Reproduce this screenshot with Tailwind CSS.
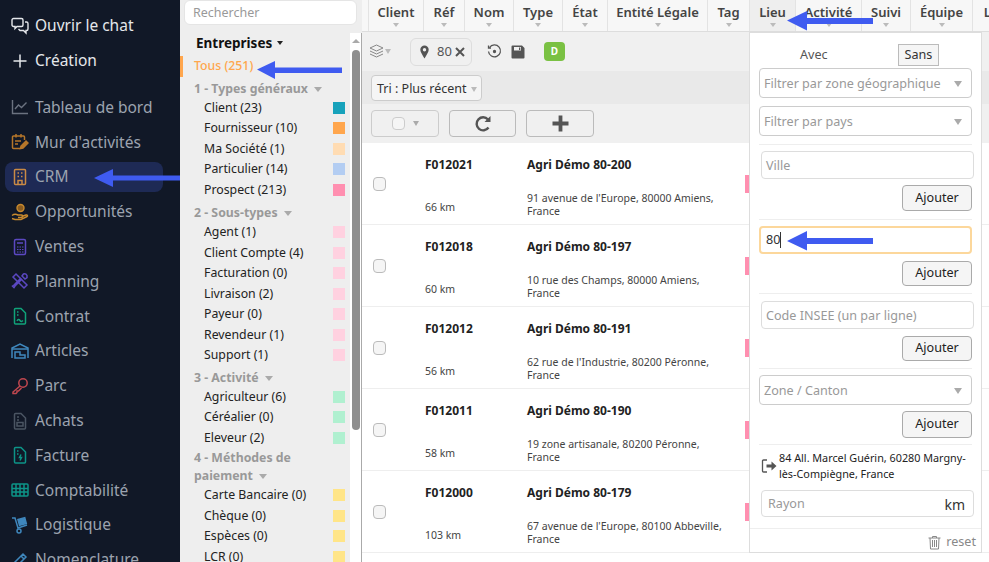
<!DOCTYPE html>
<html lang="fr">
<head>
  <meta charset="UTF-8">
  <title>CRM - Entreprises</title>
  <script src="https://cdn.jsdelivr.net/npm/@tailwindcss/browser@4"></script>
</head>
<body class="w-[989px] h-[562px] overflow-hidden relative bg-white font-['Noto_Sans',sans-serif]">
<div class="flex h-[562px] overflow-hidden">

  <!-- menu principal -->
  <aside class="w-[180px] shrink-0 bg-[#111827] text-[15.500px] text-[#9ca3af] overflow-hidden pt-[8px]">
    <div class="flex items-center h-[35px] pl-[11px] gap-[6px] text-[#e5e7eb]">
      <svg class="w-[18px] h-[18px]" viewBox="0 0 18 18" fill="none" stroke="#e5e7eb" stroke-width="1.4"><path d="M2.5 1.5h8a1.5 1.5 0 0 1 1.5 1.5v5a1.5 1.5 0 0 1-1.5 1.5H6l-2 2v-2H2.500A1.500 1.500 0 0 1 1 8V3a1.500 1.500 0 0 1 1.500-1.500z"/><path d="M14 5h1.500A1.500 1.500 0 0 1 17 6.500V12a1.500 1.500 0 0 1-1.500 1.500H15v2.500l-2.500-2.500H9l-1.500-1.500"/></svg>
      <span>Ouvrir le chat</span>
    </div>
    <div class="flex items-center h-[35px] pl-[11px] gap-[6px] text-[#e5e7eb]">
      <svg class="w-[18px] h-[18px]" viewBox="0 0 18 18" fill="none" stroke="#e5e7eb" stroke-width="1.5"><path d="M9 2.500v13M2.500 9h13"/></svg>
      <span>Création</span>
    </div>
    <div class="h-[12px]"></div>
    <div class="flex items-center h-[34.800px] pl-[11px] gap-[6px]">
      <svg class="w-[18px] h-[18px]" viewBox="0 0 18 18" fill="none" stroke="#6b7280" stroke-width="1.4"><path d="M1.500 2v13.500h15.500"/><path d="M4 11l3.500-4 3 2.500 5-5"/></svg>
      <span>Tableau de bord</span>
    </div>
    <div class="flex items-center h-[34.800px] pl-[11px] gap-[6px]">
      <svg class="w-[18px] h-[18px]" viewBox="0 0 18 18" fill="none" stroke="#b5762a" stroke-width="1.5"><path d="M9 15.500H2.500a1 1 0 0 1-1-1V4a1 1 0 0 1 1-1h10a1 1 0 0 1 1 1v3"/><path d="M5 1v3.500M10 1v3.500M4 8h6M4 11h3"/><path d="M9.500 15.500l.5-2.500 5-5 2 2-5 5z" fill="#b5762a"/></svg>
      <span>Mur d'activités</span>
    </div>
    <div class="flex items-center h-[30px] my-[2.400px] ml-[5px] w-[158px] pl-[6px] gap-[6px] rounded-lg bg-[#1e2a55]">
      <svg class="w-[18px] h-[18px]" viewBox="0 0 18 18" fill="none" stroke="#c98a45" stroke-width="1.500"><rect x="3.500" y="1.500" width="11" height="15" rx="1"/><path d="M6.500 5h1.500M10 5h1.500M6.500 8.500h1.500M10 8.500h1.500M7 16.500v-4h4v4"/></svg>
      <span>CRM</span>
    </div>
    <div class="flex items-center h-[34.800px] pl-[11px] gap-[6px]">
      <svg class="w-[18px] h-[18px]" viewBox="0 0 18 18" fill="none" stroke="#c98a2e" stroke-width="1.400"><circle cx="9.500" cy="5" r="3.500" fill="#8a5c20"/><path d="M1 12.500c2-1.500 4-1.500 6-.5h3.500a1 1 0 0 1 0 2.500H7"/><path d="M10.500 13.500l4.500-1.500c1.500-.5 2 1 1 1.500L10 16.500H4l-3-1"/></svg>
      <span>Opportunités</span>
    </div>
    <div class="flex items-center h-[34.800px] pl-[11px] gap-[6px]">
      <svg class="w-[18px] h-[18px]" viewBox="0 0 18 18" fill="none" stroke="#5b48c2" stroke-width="1.500"><rect x="3.500" y="1.500" width="11" height="15" rx="1.500"/><path d="M6 5h6"/><path d="M6 9h1.500M8.500 9H10M11 9h1.500M6 11.500h1.500M8.500 11.500H10M11 11.500h1.500M6 14h1.500M8.500 14H10M11 14h1.500" stroke-width="1.200"/></svg>
      <span>Ventes</span>
    </div>
    <div class="flex items-center h-[34.800px] pl-[11px] gap-[6px]">
      <svg class="w-[18px] h-[18px]" viewBox="0 0 18 18" fill="none" stroke="#5b48c2" stroke-width="1.500"><path d="M2 5l3-3 11 11-3 3z"/><path d="M16 3.500a3 3 0 0 0-3.500-1.500L11 4l3 3 2-1.500z"/><path d="M11 7L4 14l-1 1.500L1.500 14 3 13l7-7"/></svg>
      <span>Planning</span>
    </div>
    <div class="flex items-center h-[34.800px] pl-[11px] gap-[6px]">
      <svg class="w-[18px] h-[18px]" viewBox="0 0 18 18" fill="none" stroke="#10a37a" stroke-width="1.500"><path d="M3.500 2.500a1 1 0 0 1 1-1H10l4.500 4.500v10a1 1 0 0 1-1 1h-9a1 1 0 0 1-1-1z"/><path d="M6 5h1.500M6 8h1.500M6 14c1-2 2-2 3-.5s2 1 3 0"/></svg>
      <span>Contrat</span>
    </div>
    <div class="flex items-center h-[34.800px] pl-[11px] gap-[6px]">
      <svg class="w-[18px] h-[18px]" viewBox="0 0 18 18" fill="none" stroke="#3f87bd" stroke-width="1.500"><path d="M1 16V6l8-4 8 4v10"/><path d="M1 7h16M4 16v-6h5v3h5v3z"/></svg>
      <span>Articles</span>
    </div>
    <div class="flex items-center h-[34.800px] pl-[11px] gap-[6px]">
      <svg class="w-[18px] h-[18px]" viewBox="0 0 18 18" fill="none" stroke="#c0474f" stroke-width="1.500"><circle cx="12" cy="6" r="4.200"/><path d="M9 9l-7 6v1.500h3l1-1v-1.500h1.500l3-3"/></svg>
      <span>Parc</span>
    </div>
    <div class="flex items-center h-[34.800px] pl-[11px] gap-[6px]">
      <svg class="w-[18px] h-[18px]" viewBox="0 0 18 18" fill="none" stroke="#4b5563" stroke-width="1.500"><path d="M3.500 2.500a1 1 0 0 1 1-1H10l4.500 4.500v10a1 1 0 0 1-1 1h-9a1 1 0 0 1-1-1z"/><path d="M6 5h2M6 8h2"/><rect x="6" y="10.500" width="6" height="3.500"/></svg>
      <span>Achats</span>
    </div>
    <div class="flex items-center h-[34.800px] pl-[11px] gap-[6px]">
      <svg class="w-[18px] h-[18px]" viewBox="0 0 18 18" fill="none" stroke="#0d9488" stroke-width="1.500"><path d="M3.500 2.500a1 1 0 0 1 1-1H10l4.500 4.500v10a1 1 0 0 1-1 1h-9a1 1 0 0 1-1-1z"/><path d="M6 5h1.500M6 8h1.500M10 8.500l-1.500 3h2l-1.500 3"/></svg>
      <span>Facture</span>
    </div>
    <div class="flex items-center h-[34.800px] pl-[11px] gap-[6px]">
      <svg class="w-[18px] h-[18px]" viewBox="0 0 18 18" fill="none" stroke="#0d9488" stroke-width="1.500"><rect x="1" y="3" width="16" height="12" rx="1"/><path d="M5 3v12M9 3v12M13 3v12M1 7.500h16M1 11h16"/></svg>
      <span>Comptabilité</span>
    </div>
    <div class="flex items-center h-[34.800px] pl-[11px] gap-[6px]">
      <svg class="w-[18px] h-[18px]" viewBox="0 0 18 18" fill="none" stroke="#3f87bd" stroke-width="1.500"><path d="M1 2h3l3 10 9-3"/><circle cx="8" cy="15" r="2"/><rect x="7.500" y="2.500" width="7" height="6" fill="#3f87bd" transform="rotate(-15 11 5)"/></svg>
      <span>Logistique</span>
    </div>
    <div class="flex items-center h-[34.800px] pl-[11px] gap-[6px]">
      <svg class="w-[18px] h-[18px]" viewBox="0 0 18 18" fill="none" stroke="#3f87bd" stroke-width="1.500"><path d="M2 16l1-4 9-9 3 3-9 9z"/><path d="M10 5l3 3"/></svg>
      <span>Nomenclature</span>
    </div>
  </aside>

  <!-- filtres -->
  <section class="w-[182px] shrink-0 bg-[#eeeeee] relative">
    <div class="h-[33px] pl-[4px] pr-[5px]">
      <div class="h-[25px] w-[173px] bg-white border border-[#e5e5e5] rounded-md pl-[8px] text-[12.500px] leading-[23px] text-[#999]">Rechercher</div>
    </div>
    <div class="flex h-[529px]">
      <div class="w-[170px] overflow-hidden text-[12.300px] text-[#222]">
        <div class="h-[20px] pl-[16px] text-[13.500px] font-bold text-[#111] leading-[20px] flex items-center gap-[5px]">Entreprises <span class="w-0 h-0 border-x-[3.500px] border-x-transparent border-t-[4px] border-t-[#222]"></span></div>
        <div class="mt-[3px] h-[21px] flex items-center pl-[11px] border-l-[3px] border-[#ffa64d] text-[#ffa64d] font-medium">Tous (251)</div>
        <div id="filters"></div>
      </div>
      <div class="w-[12px] bg-white relative border-r border-[#aaa]">
        <div class="mx-auto mt-[6px] w-0 h-0 border-x-[4px] border-x-transparent border-b-[4px] border-b-[#aaa]"></div>
        <div class="absolute left-[2px] top-[17px] w-[8px] h-[380px] rounded bg-[#8f8f8f]"></div>
      </div>
    </div>
  </section>

  <!-- contenu -->
  <main class="flex-1 min-w-0 text-[#222]">
    <div id="cols" class="flex h-[32px] pl-[6px] bg-[#f7f7f7] border-b border-[#ddd] overflow-hidden"></div>

    <div class="h-[39px] bg-[#f0f0f0] flex items-center pl-[7px]">
      <svg class="w-[15px] h-[15px]" viewBox="0 0 15 15" fill="none" stroke="#888" stroke-width="1"><path d="M7.500 1L14 4 7.500 7 1 4z"/><path d="M1 7l6.500 3L14 7M1 10l6.500 3L14 10"/></svg>
      <span class="ml-[1px] w-0 h-0 border-x-[3.500px] border-x-transparent border-t-[5px] border-t-[#bbb]"></span>
      <div class="ml-[19px] w-[62px] h-[28px] border border-[#ddd] rounded-md flex items-center pl-[8px] text-[13px] text-[#555]">
        <svg class="w-[11px] h-[14px]" viewBox="0 0 11 14" fill="#555"><path fill-rule="evenodd" d="M5.500 0.500a4.200 4.200 0 0 1 4.200 4.200c0 2.500-2.500 5.500-4.200 8.800C3.800 10.200 1.300 7.200 1.300 4.700A4.200 4.200 0 0 1 5.500 0.500zm0 2.500a1.700 1.700 0 1 0 0 3.400 1.700 1.700 0 0 0 0-3.400z"/></svg>
        <span class="ml-[7px]">80</span>
        <svg class="ml-[3px] w-[10px] h-[10px]" viewBox="0 0 10 10" stroke="#555" stroke-width="2"><path d="M1 1l8 8M9 1l-8 8"/></svg>
      </div>
      <svg class="ml-[15px] w-[15px] h-[15px]" viewBox="0 0 15 15" fill="none" stroke="#555" stroke-width="1.300"><path d="M2.500 3.500A6 6 0 1 1 1.500 7.500"/><path d="M1.500 1.500v2.500H4" /><circle cx="7.500" cy="7.500" r="1" fill="#555"/></svg>
      <svg class="ml-[9px] w-[14px] h-[14px]" viewBox="0 0 14 14" fill="#555"><path fill-rule="evenodd" d="M1.500 0.500h9.500l2.500 2.500v9.500a1 1 0 0 1-1 1h-11a1 1 0 0 1-1-1v-11a1 1 0 0 1 1-1zM3 2v3.500h7V2zM8 2.500h1.300v2.500H8z"/></svg>
      <div class="ml-[19px] w-[21px] h-[19px] rounded bg-[#7ac143] text-white text-[10px] font-bold flex items-center justify-center">D</div>
    </div>

    <div class="h-[33px] bg-[#e9e9e9] flex items-end pb-[3px] pl-[9px]">
      <div class="w-[111px] h-[26px] border border-[#ccc] rounded bg-[#f5f5f5] flex items-center pl-[5px] gap-[4px] text-[12.500px] text-[#333] whitespace-nowrap pt-[3px]">Tri : Plus récent <span class="w-0 h-0 border-x-[3.500px] border-x-transparent border-t-[5px] border-t-[#bbb]"></span></div>
    </div>

    <div class="h-[39px] bg-[#f0f0f0] flex items-center pl-[9px] gap-[10px]">
      <div class="w-[68px] h-[27px] border border-[#ccc] rounded flex items-center justify-center gap-[8px]">
        <span class="w-[13px] h-[13px] bg-[#f5f5f5] border border-[#ccc] rounded-sm"></span>
        <span class="w-0 h-0 border-x-[3.500px] border-x-transparent border-t-[5px] border-t-[#aaa]"></span>
      </div>
      <div class="w-[67px] h-[27px] border border-[#bbb] rounded flex items-center justify-center">
        <svg class="w-[18px] h-[18px]" viewBox="0 0 18 18" fill="none" stroke="#555" stroke-width="2.400"><path d="M14.500 12.500A6.500 6.500 0 1 1 14 4.500"/><path d="M16.500 1v6h-6z" fill="#555" stroke="none"/></svg>
      </div>
      <div class="w-[68px] h-[27px] border border-[#bbb] rounded flex items-center justify-center">
        <svg class="w-[17px] h-[17px]" viewBox="0 0 17 17" stroke="#555" stroke-width="3.800"><path d="M8.500 0.500v16M0.500 8.500h16"/></svg>
      </div>
    </div>

    <div id="rows"></div>
  </main>
</div>

<!-- panneau Lieu -->
<div class="absolute left-[749px] top-[32px] w-[233px] h-[521px] bg-white border border-[#ddd] text-[12.600px] text-[#333] px-[9px]">
  <div class="h-[35px] relative">
    <span class="absolute left-[41px] top-[13px] text-[#555]">Avec</span>
    <span class="absolute left-[139px] top-[11px] w-[41px] h-[22px] border border-[#bbb] bg-[#f5f5f5] flex items-center justify-center text-[#333]">Sans</span>
  </div>
  <div class="h-[30px] border border-[#ccc] rounded flex items-center justify-between px-[4px] pt-[2px] text-[#999]">Filtrer par zone géographique <span class="mr-[5px] w-0 h-0 border-x-[4px] border-x-transparent border-t-[6px] border-t-[#aaa]"></span></div>
  <div class="mt-[8px] h-[30px] border border-[#ccc] rounded flex items-center justify-between px-[4px] pt-[2px] text-[#999]">Filtrer par pays <span class="mr-[5px] w-0 h-0 border-x-[4px] border-x-transparent border-t-[6px] border-t-[#aaa]"></span></div>
  <div class="mt-[8px] border-t border-[#eee]"></div>

  <div class="mt-[6px] ml-[2px] -mr-[2px] h-[28px] border border-[#ddd] rounded flex items-center px-[4px] pt-[2px] text-[#999]">Ville</div>
  <div class="mt-[6px] ml-auto w-[70px] h-[26px] border border-[#aaa] rounded bg-[#f5f5f5] flex items-center justify-center text-[#222]">Ajouter</div>
  <div class="mt-[8px] border-t border-[#eee]"></div>

  <div class="mt-[6px] h-[28px] w-[213px] border-2 border-[#fcd79b] rounded flex items-center px-[5px] text-[#333]">80<span class="w-px h-[16px] bg-[#333]"></span></div>
  <div class="mt-[7px] ml-auto w-[70px] h-[25px] border border-[#aaa] rounded bg-[#f5f5f5] flex items-center justify-center text-[#222]">Ajouter</div>
  <div class="mt-[7px] border-t border-[#eee]"></div>

  <div class="mt-[7px] ml-[2px] -mr-[2px] h-[28px] border border-[#ddd] rounded flex items-center px-[4px] pt-[2px] text-[#999]">Code INSEE (un par ligne)</div>
  <div class="mt-[7px] ml-auto w-[70px] h-[25px] border border-[#aaa] rounded bg-[#f5f5f5] flex items-center justify-center text-[#222]">Ajouter</div>
  <div class="mt-[7px] border-t border-[#eee]"></div>

  <div class="mt-[6px] h-[30px] border border-[#ccc] rounded flex items-center justify-between px-[4px] pt-[2px] text-[#999]">Zone / Canton <span class="mr-[5px] w-0 h-0 border-x-[4px] border-x-transparent border-t-[6px] border-t-[#aaa]"></span></div>
  <div class="mt-[6px] ml-auto w-[70px] h-[27px] border border-[#aaa] rounded bg-[#f5f5f5] flex items-center justify-center text-[#222]">Ajouter</div>
  <div class="mt-[6px] border-t border-[#eee]"></div>

  <div class="mt-[5px] flex items-center h-[32px] text-[10.800px] leading-[16px] text-[#222]">
    <svg class="w-[16px] h-[16px] ml-[2px] shrink-0" viewBox="0 0 16 16" fill="none" stroke="#555" stroke-width="1.300"><path d="M6 2H2.500a1 1 0 0 0-1 1v10a1 1 0 0 0 1 1H6"/><path d="M5.500 6.500h5V3.500l5 4.500-5 4.500v-3h-5z" fill="#555" stroke="none"/></svg>
    <span class="ml-[2px]">84 All. Marcel Guérin, 60280 Margny-lès-Compiègne, France</span>
  </div>
  <div class="mt-[8px] ml-[2px] -mr-[2px] h-[27px] border border-[#ddd] rounded flex items-center justify-between pl-[6px] pr-[8px] pt-[2px] text-[#999]">Rayon <span class="text-[#333] text-[14px]">km</span></div>
  <div class="mt-[11px] -mx-[9px] border-t border-[#eee]"></div>
  <div class="mt-[4px] -mr-[4px] flex items-center justify-end gap-[5px] text-[#888]">
    <svg class="w-[13px] h-[15px]" viewBox="0 0 13 15" fill="none" stroke="#888" stroke-width="1"><path d="M0.500 3h12M4.500 3V1.500h4V3M2 3l.5 11h8L11 3M4.500 5v7M6.500 5v7M8.500 5v7"/></svg>
    reset
  </div>
</div>

<!-- flèches d'annotation -->
<svg class="absolute left-0 top-0 w-[989px] h-[562px] pointer-events-none" viewBox="0 0 989 562" fill="#3f5bf0">
  <path d="M94 178l19-9v6.500h67v5h-67v6.500z"/>
  <path d="M257 69.500l18-8.500v6.500h67v5.500h-67v6z"/>
  <path d="M787 20.500l20-9.500v7h66v6h-66v6.500z"/>
  <path d="M787 241l20-10v7h66v6h-66v6.500z"/>
</svg>

<script>
  const groups = [
    { title: '1 - Types généraux', gap: 'mt-[2.500px]', items: [['Client (23)', 'bg-[#17a2bb]'], ['Fournisseur (10)', 'bg-[#ffa64d]'], ['Ma Société (1)', 'bg-[#ffdcb3]'], ['Particulier (14)', 'bg-[#b3cdf2]'], ['Prospect (213)', 'bg-[#ff8fb0]']] },
    { title: '2 - Sous-types', gap: 'mt-[4px]', items: [['Agent (1)', 'bg-[#ffd1e0]'], ['Client Compte (4)', 'bg-[#ffd1e0]'], ['Facturation (0)', 'bg-[#ffd1e0]'], ['Livraison (2)', 'bg-[#ffd1e0]'], ['Payeur (0)', 'bg-[#ffd1e0]'], ['Revendeur (1)', 'bg-[#ffd1e0]'], ['Support (1)', 'bg-[#ffd1e0]']] },
    { title: '3 - Activité', gap: 'mt-[3px]', items: [['Agriculteur (6)', 'bg-[#b0f0d0]'], ['Céréalier (0)', 'bg-[#b0f0d0]'], ['Eleveur (2)', 'bg-[#b0f0d0]']] },
    { title: '4 - Méthodes de paiement', gap: 'mt-[1px]', items: [['Carte Bancaire (0)', 'bg-[#ffe588]'], ['Chèque (0)', 'bg-[#ffe588]'], ['Espèces (0)', 'bg-[#ffe588]'], ['LCR (0)', 'bg-[#ffe588]']] }
  ];

  document.getElementById('filters').innerHTML = groups.map(g => `
    <div class="${g.gap} pl-[14px] pr-[20px] font-bold text-[#999] leading-[18px]">${g.title} <span class="inline-block ml-[3px] mb-[1px] w-0 h-0 border-x-[4px] border-x-transparent border-t-[5px] border-t-[#aaa]"></span></div>
    ${g.items.map(i => `<div class="h-[20.500px] flex items-center justify-between pl-[24px] pr-[5px]"><span>${i[0]}</span><span class="w-[12px] h-[12px] ${i[1]}"></span></div>`).join('')}
  `).join('');

  const cols = [['Client', 'w-[56px] border-l'], ['Réf', 'w-[41px]'], ['Nom', 'w-[49px]'], ['Type', 'w-[49px]'], ['État', 'w-[45px]'], ['Entité Légale', 'w-[100px]'], ['Tag', 'w-[42px]'], ['Lieu', 'w-[46px] bg-[#eeeeee]'], ['Activité', 'w-[66px]'], ['Suivi', 'w-[49px]'], ['Équipe', 'w-[62px]'], ['Livraison', 'w-[80px]']];
  document.getElementById('cols').innerHTML = cols.map(c => `
    <div class="${c[1]} shrink-0 border-r border-[#e3e3e3] flex flex-col items-center pt-[3px] text-[13px] font-semibold text-[#444] leading-[18px] whitespace-nowrap overflow-hidden">
      ${c[0]}
      <span class="mt-[2px] w-0 h-0 border-x-[3.500px] border-x-transparent border-t-[4px] border-t-[#bbb]"></span>
    </div>`).join('');

  const rows = [
    ['F012021', 'Agri Démo 80-200', '66 km', "91 avenue de l'Europe, 80000 Amiens,", 'France'],
    ['F012018', 'Agri Démo 80-197', '60 km', '10 rue des Champs, 80000 Amiens,', 'France'],
    ['F012012', 'Agri Démo 80-191', '56 km', "62 rue de l'Industrie, 80200 Péronne,", 'France'],
    ['F012011', 'Agri Démo 80-190', '58 km', '19 zone artisanale, 80200 Péronne,', 'France'],
    ['F012000', 'Agri Démo 80-179', '103 km', "67 avenue de l'Europe, 80100 Abbeville,", 'France']
  ];
  document.getElementById('rows').innerHTML = rows.map(r => `
    <div class="h-[82px] border-b border-[#eeeeee] flex">
      <div class="w-[11px] shrink-0"></div>
      <div class="w-[52px] shrink-0 flex items-center"><span class="w-[13px] h-[14px] bg-[#f5f5f5] border border-[#bbb] rounded-sm"></span></div>
      <div class="w-[102px] shrink-0 flex flex-col justify-between pt-[13px] pb-[10px]">
        <span class="text-[12px] font-bold text-[#222] leading-[18px]">${r[0]}</span>
        <span class="text-[10.500px] text-[#444] leading-[14px]">${r[2]}</span>
      </div>
      <div class="w-[218px] shrink-0 flex flex-col justify-between pt-[13px] pb-[6px]">
        <span class="text-[12px] font-bold text-[#222] leading-[18px]">${r[1]}</span>
        <span class="text-[10.500px] text-[#444] leading-[13px]">${r[3]}<br>${r[4]}</span>
      </div>
      <div class="flex items-center"><span class="w-[4px] h-[18px] bg-[#ff8fb0]"></span></div>
    </div>`).join('');
</script>
</body>
</html>
